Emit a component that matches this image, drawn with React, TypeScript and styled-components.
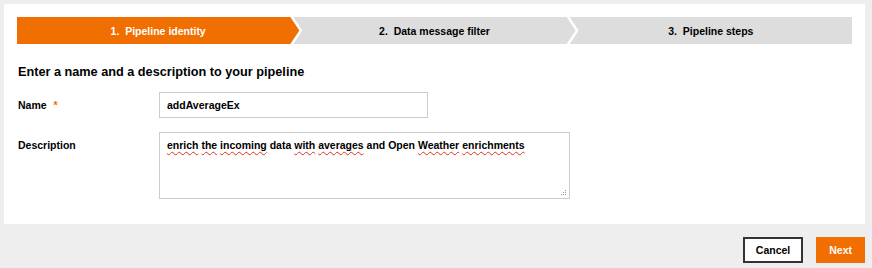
import React from "react";
import styled, { createGlobalStyle } from "styled-components";

const ORANGE = "#f16e00";

const Global = createGlobalStyle`
  html, body { margin: 0; padding: 0; }
  body {
    background: #eeeeee;
    font-family: "Liberation Sans", Arial, Helvetica, sans-serif;
    color: #000;
    width: 872px;
    height: 268px;
    overflow: hidden;
  }
`;

const Page = styled.div`
  display: flex;
  flex-direction: column;
  padding: 4px 7px 0 4px;
`;

const Panel = styled.div`
  background: #fff;
  height: 220px;
  box-sizing: border-box;
  padding: 13px 13px 0 13px;
  display: flex;
  flex-direction: column;
`;

const Stepper = styled.div`
  display: flex;
  height: 27px;
`;

const Step = styled.div<{ $active?: boolean; $pos: "first" | "mid" | "last" }>`
  flex: 1;
  display: flex;
  align-items: center;
  justify-content: center;
  background: ${(p) => (p.$active ? ORANGE : "#dddddd")};
  color: ${(p) => (p.$active ? "#fff" : "#000")};
  font-size: 10.5px;
  font-weight: bold;
  margin-left: ${(p) => (p.$pos === "first" ? "0" : "-6px")};
  clip-path: ${(p) =>
    p.$pos === "first"
      ? "polygon(0 0, calc(100% - 9px) 0, 100% 50%, calc(100% - 9px) 100%, 0 100%)"
      : p.$pos === "mid"
      ? "polygon(0 0, calc(100% - 9px) 0, 100% 50%, calc(100% - 9px) 100%, 0 100%, 9px 50%)"
      : "polygon(0 0, 100% 0, 100% 100%, 0 100%, 9px 50%)"};
`;

const Heading = styled.h2`
  margin: 20px 0 0 1px;
  font-size: 12.7px;
  line-height: 16px;
  font-weight: bold;
`;

const Row = styled.div<{ $top: number }>`
  display: flex;
  align-items: flex-start;
  margin-top: ${(p) => p.$top}px;
`;

const Label = styled.label<{ $pad: number }>`
  width: 141px;
  padding-left: 1px;
  padding-top: ${(p) => p.$pad}px;
  font-size: 10.5px;
  font-weight: bold;
  line-height: 13px;
`;

const Required = styled.span`
  color: ${ORANGE};
  margin-left: 7px;
`;

const Input = styled.input`
  width: 269px;
  height: 26px;
  box-sizing: border-box;
  border: 1px solid #cccccc;
  padding: 0 7px;
  font-family: inherit;
  font-size: 10.5px;
  font-weight: bold;
  color: #000;
  outline: none;
`;

const TextArea = styled.div`
  position: relative;
  width: 411px;
  height: 67px;
  box-sizing: border-box;
  border: 1px solid #cccccc;
  padding: 6px 7px;
  font-size: 10.5px;
  font-weight: bold;
  line-height: 13px;
`;

const Misspelled = styled.span`
  text-decoration: underline wavy #e0301e;
  text-decoration-thickness: 1px;
  text-underline-offset: 2px;
`;

const Grip = styled.svg`
  position: absolute;
  right: 2px;
  bottom: 2px;
`;

const Footer = styled.div`
  display: flex;
  justify-content: flex-end;
  gap: 13px;
  padding-top: 13px;
`;

const Button = styled.button<{ $primary?: boolean }>`
  height: 26px;
  box-sizing: border-box;
  padding: 0 ${(p) => (p.$primary ? "12px" : "11px")};
  font-family: inherit;
  font-size: 10.5px;
  font-weight: bold;
  border: ${(p) => (p.$primary ? `1px solid ${ORANGE}` : "2px solid #333333")};
  background: ${(p) => (p.$primary ? ORANGE : "#fff")};
  color: ${(p) => (p.$primary ? "#fff" : "#000")};
  cursor: pointer;
`;

const words: [string, boolean][] = [
  ["enrich", true],
  [" ", false],
  ["the", true],
  [" ", false],
  ["incoming", true],
  [" data ", false],
  ["with", true],
  [" ", false],
  ["averages", true],
  [" and Open ", false],
  ["Weather", true],
  [" ", false],
  ["enrichments", true],
];

export default function App() {
  return (
    <>
      <Global />
      <Page>
        <Panel>
          <Stepper>
            <Step $active $pos="first">1.&nbsp; Pipeline identity</Step>
            <Step $pos="mid">2.&nbsp; Data message filter</Step>
            <Step $pos="last">3.&nbsp; Pipeline steps</Step>
          </Stepper>
          <Heading>Enter a name and a description to your pipeline</Heading>
          <Row $top={12}>
            <Label $pad={7}>
              Name<Required>*</Required>
            </Label>
            <Input defaultValue="addAverageEx" spellCheck={false} />
          </Row>
          <Row $top={14}>
            <Label $pad={7}>Description</Label>
            <TextArea>
              {words.map(([w, bad], i) =>
                bad ? <Misspelled key={i}>{w}</Misspelled> : <React.Fragment key={i}>{w}</React.Fragment>
              )}
              <Grip width="7" height="7" viewBox="0 0 7 7">
                <g fill="#999">
                  <rect x="5" y="1" width="1" height="1" />
                  <rect x="3" y="3" width="1" height="1" />
                  <rect x="5" y="3" width="1" height="1" />
                  <rect x="1" y="5" width="1" height="1" />
                  <rect x="3" y="5" width="1" height="1" />
                  <rect x="5" y="5" width="1" height="1" />
                </g>
              </Grip>
            </TextArea>
          </Row>
        </Panel>
        <Footer>
          <Button>Cancel</Button>
          <Button $primary>Next</Button>
        </Footer>
      </Page>
    </>
  );
}
